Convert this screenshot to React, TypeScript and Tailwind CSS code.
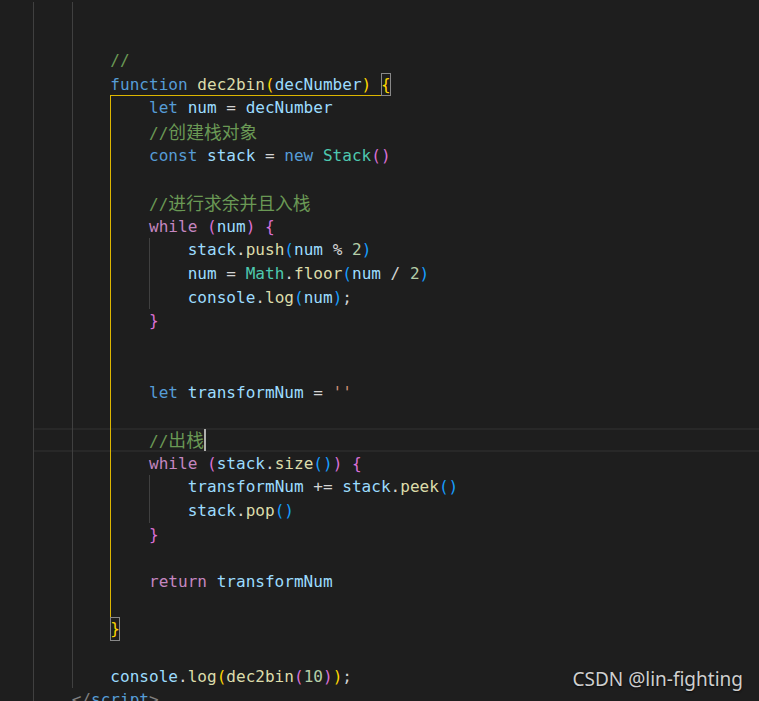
import React from 'react';

// token = [text, colour class]
type Tok = [string, string];

const com = 'text-[#6a9955]';
const kw = 'text-[#569cd6]';
const ctl = 'text-[#c586c0]';
const fn = 'text-[#dcdcaa]';
const v = 'text-[#9cdcfe]';
const cls = 'text-[#4ec9b0]';
const op = 'text-[#d4d4d4]';
const num = 'text-[#b5cea8]';
const str = 'text-[#ce9178]';
const b1 = 'text-[#ffd700]';
const b2 = 'text-[#da70d6]';
const b3 = 'text-[#179fff]';
const tag = 'text-[#808080]';
const cjk = "text-[#6a9955] text-[17.8px] font-['Noto_Sans_CJK_SC',sans-serif]";

type Line = {
  indent: number; // in columns
  toks: Tok[];
  kind?: 'fnHead' | 'fnEnd' | 'cursor';
};

const lines: Line[] = [
  { indent: 0, toks: [] },
  { indent: 0, toks: [] },
  { indent: 8, toks: [['//', com]] },
  { indent: 8, kind: 'fnHead', toks: [['function', kw], [' ', op], ['dec2bin', fn], ['(', b1], ['decNumber', v], [')', b1], [' ', op]] },
  { indent: 12, toks: [['let', kw], [' ', op], ['num', v], [' = ', op], ['decNumber', v]] },
  { indent: 12, toks: [['//', com], ['创建栈对象', cjk]] },
  { indent: 12, toks: [['const', kw], [' ', op], ['stack', v], [' = ', op], ['new', kw], [' ', op], ['Stack', cls], ['()', b2]] },
  { indent: 0, toks: [] },
  { indent: 12, toks: [['//', com], ['进行求余并且入栈', cjk]] },
  { indent: 12, toks: [['while', ctl], [' ', op], ['(', b2], ['num', v], [')', b2], [' ', op], ['{', b2]] },
  { indent: 16, toks: [['stack', v], ['.', op], ['push', fn], ['(', b3], ['num', v], [' % ', op], ['2', num], [')', b3]] },
  { indent: 16, toks: [['num', v], [' = ', op], ['Math', cls], ['.', op], ['floor', fn], ['(', b3], ['num', v], [' / ', op], ['2', num], [')', b3]] },
  { indent: 16, toks: [['console', v], ['.', op], ['log', fn], ['(', b3], ['num', v], [')', b3], [';', op]] },
  { indent: 12, toks: [['}', b2]] },
  { indent: 0, toks: [] },
  { indent: 0, toks: [] },
  { indent: 12, toks: [['let', kw], [' ', op], ['transformNum', v], [' = ', op], ["''", str]] },
  { indent: 0, toks: [] },
  { indent: 12, kind: 'cursor', toks: [['//', com], ['出栈', cjk]] },
  { indent: 12, toks: [['while', ctl], [' ', op], ['(', b2], ['stack', v], ['.', op], ['size', fn], ['()', b3], [')', b2], [' ', op], ['{', b2]] },
  { indent: 16, toks: [['transformNum', v], [' += ', op], ['stack', v], ['.', op], ['peek', fn], ['()', b3]] },
  { indent: 16, toks: [['stack', v], ['.', op], ['pop', fn], ['()', b3]] },
  { indent: 12, toks: [['}', b2]] },
  { indent: 0, toks: [] },
  { indent: 12, toks: [['return', ctl], [' ', op], ['transformNum', v]] },
  { indent: 0, toks: [] },
  { indent: 8, kind: 'fnEnd', toks: [['}', b1]] },
  { indent: 0, toks: [] },
  { indent: 8, toks: [['console', v], ['.', op], ['log', fn], ['(', b1], ['dec2bin', fn], ['(', b2], ['10', num], [')', b2], [')', b1], [';', op]] },
  { indent: 4, toks: [['</', tag], ['script', kw], ['>', tag]] },
];

const GRAY = 'border-[#404040]';
const GOLD = 'border-[#dcb600]';

// which indent guides a row shows (index = row in the lines array)
function guidesFor(i: number, line: Line): string[] {
  const g: string[] = [GRAY];
  if (i <= 28) g.push(GRAY);
  else g.push('border-transparent');
  if (i >= 4 && i <= 25) g.push(GOLD);
  if ((i >= 10 && i <= 12) || (i >= 20 && i <= 21)) g.push(GRAY);
  const need = line.indent / 4;
  while (g.length > need && g[g.length - 1] === 'border-transparent') g.pop();
  while (g.length < need) g.push('border-transparent');
  return g;
}

const Toks = ({ toks }: { toks: Tok[] }) => (
  <>
    {toks.map(([t, c], k) => (
      <span key={k} className={c}>{t}</span>
    ))}
  </>
);

const Row = ({ i, line }: { i: number; line: Line }) => {
  const guides = guidesFor(i, line);
  const current = line.kind === 'cursor';
  return (
    <div className="flex h-[23.7px] leading-[23.7px]">
      <div className="w-[33px] shrink-0" />
      <div className={`flex flex-1 ${current ? 'shadow-[inset_0_2px_0_#282828,inset_0_-2px_0_#282828]' : ''}`}>
        {guides.map((g, k) => (
          <div key={k} className={`w-[38.68px] shrink-0 border-l ${g}`} />
        ))}
        {line.kind === 'fnHead' ? (
          <>
            <div className="whitespace-pre border-b border-[#dcb600]">
              <Toks toks={line.toks} />
            </div>
            <div className="whitespace-pre outline-1 -outline-offset-1 outline-[#888888] text-[#ffd700]">{'{'}</div>
          </>
        ) : line.kind === 'fnEnd' ? (
          <div className="whitespace-pre outline-1 -outline-offset-1 outline-[#888888] shadow-[inset_0_1px_0_#dcb600]">
            <Toks toks={line.toks} />
          </div>
        ) : (
          <div className="whitespace-pre">
            <Toks toks={line.toks} />
            {current && <span className="inline-block h-[22px] w-[2px] bg-[#aeafad] align-top mt-[1px]" />}
          </div>
        )}
      </div>
    </div>
  );
}

export default function App() {
  return (
    <div className="relative h-[701px] w-full overflow-hidden bg-[#1e1e1e] pt-[1.5px] font-['DejaVu_Sans_Mono','Noto_Sans_CJK_SC',monospace] text-[16.06px] text-[#d4d4d4]">
      {lines.map((l, i) => (
        <Row key={i} i={i} line={l} />
      ))}

      {/* CSDN watermark */}
      <div className="absolute right-[16px] top-[667px] font-['Noto_Sans',sans-serif] text-[19px] leading-[24px] text-[#cfcfcf] [text-shadow:0_1px_2px_rgba(0,0,0,0.7)]">
        CSDN @lin-fighting
      </div>
    </div>
  );
}
